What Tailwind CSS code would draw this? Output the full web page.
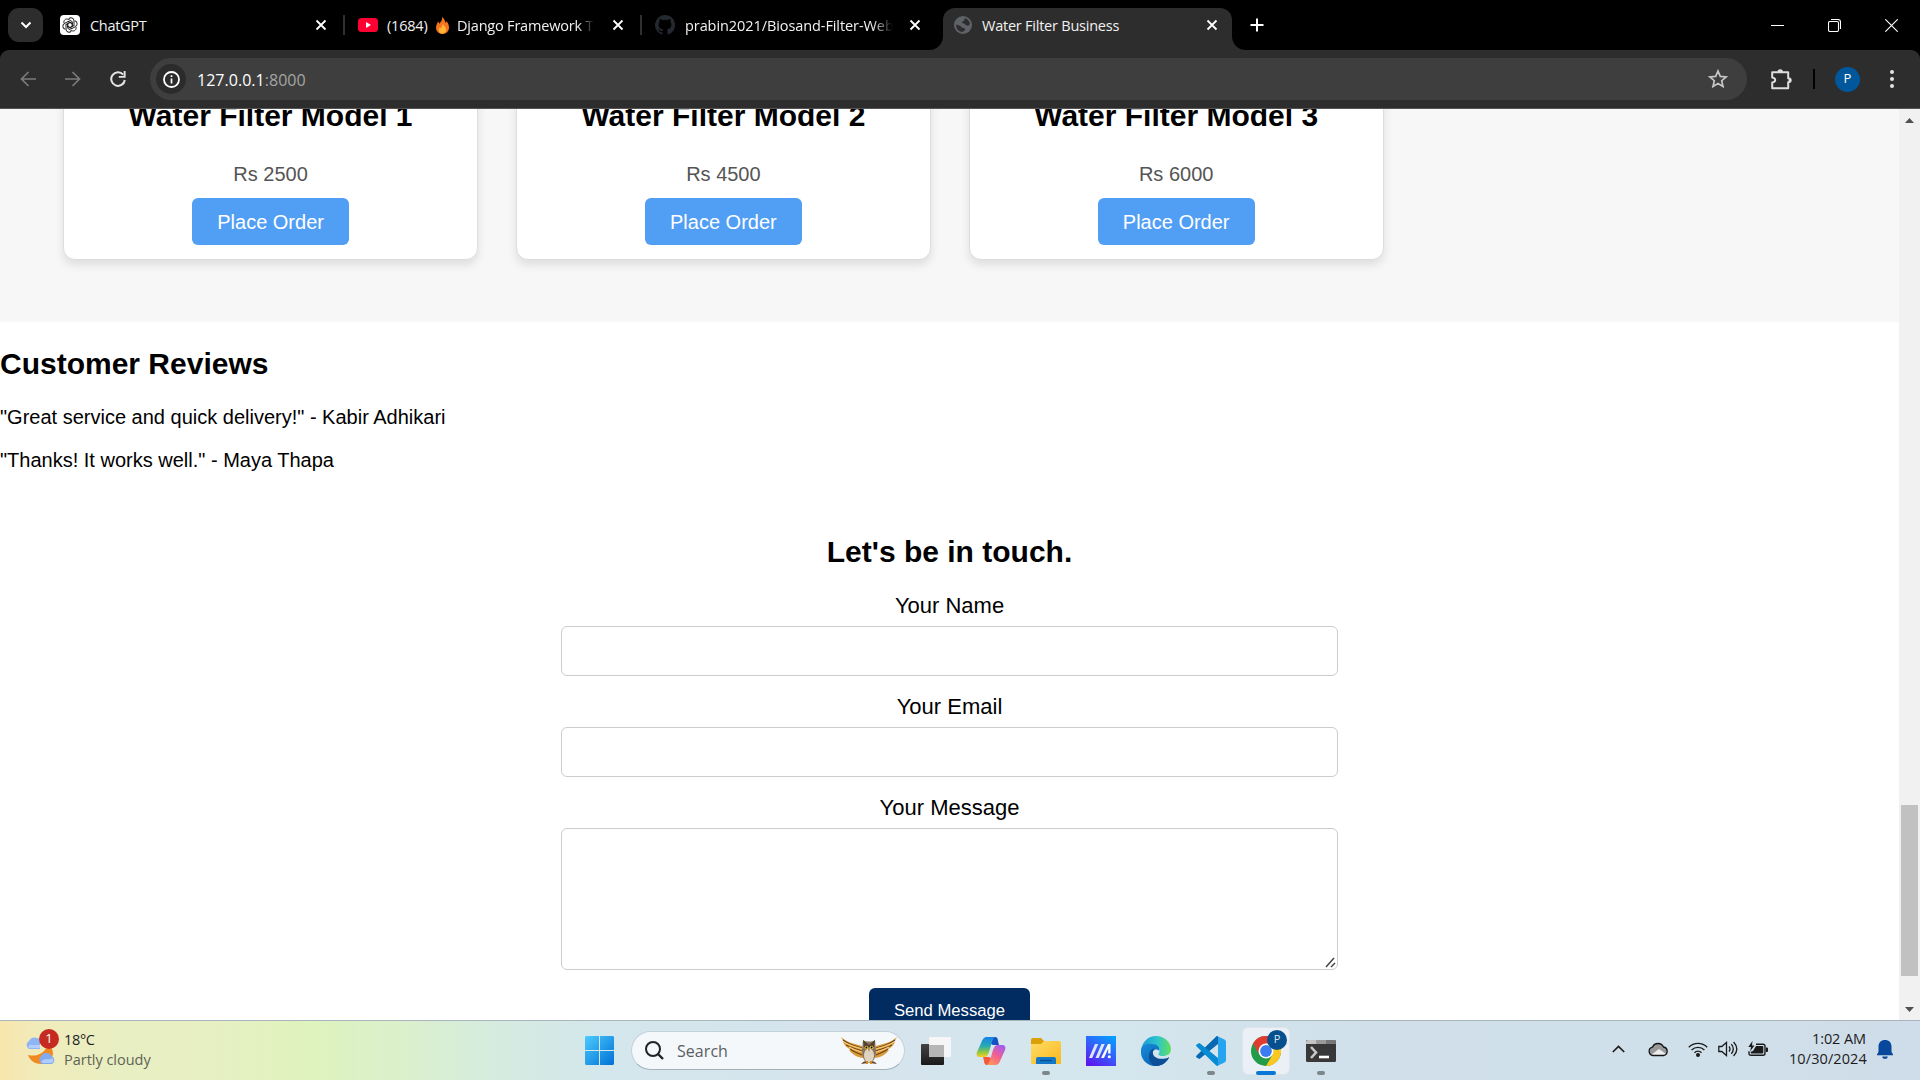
<!DOCTYPE html>
<html lang="en">
<head>
<meta charset="utf-8">
<title>Water Filter Business</title>
<script src="https://cdn.jsdelivr.net/npm/@tailwindcss/browser@4"></script>
</head>
<body class="flex h-[1080px] w-[1920px] flex-col overflow-hidden bg-white font-['Liberation_Sans',Arial,sans-serif] text-black">

<!-- Tab strip -->
<header class="flex h-[50px] shrink-0 items-center bg-black font-['Open_Sans','Noto_Sans',sans-serif] text-[14.5px] text-[#f1f1f1]">
  <button class="ml-2 flex h-[34px] w-[35px] items-center justify-center rounded-[11px] bg-[#2d2d2d]">
    <svg class="h-3 w-3" viewBox="0 0 12 12" fill="none" stroke="#fff" stroke-width="2"><path d="M1.500 3.500 6 8l4.500-4.500"/></svg>
  </button>

  <div class="ml-1 flex h-5 w-[298px] items-center border-r-2 border-[#303030] pr-4 pl-[13px]">
    <svg class="h-5 w-5 shrink-0" viewBox="0 0 20 20"><rect width="20" height="20" rx="4" fill="#fff"/><g fill="none" stroke="#222" stroke-width="1"><path id="petal" d="M10 7.400 7.700 8.700v4.600l4 2.300c2.700 1.400 5-1.200 4.300-3.600"/><use href="#petal" transform="rotate(60 10 10)"/><use href="#petal" transform="rotate(120 10 10)"/><use href="#petal" transform="rotate(180 10 10)"/><use href="#petal" transform="rotate(240 10 10)"/><use href="#petal" transform="rotate(300 10 10)"/></g></svg>
    <span class="ml-2.5 flex-1 pt-px tracking-[-0.3px]">ChatGPT</span>
    <svg class="h-3 w-3" viewBox="0 0 12 12" stroke="#fff" stroke-width="1.800"><path d="m1.500 1.500 9 9m0-9-9 9"/></svg>
  </div>

  <div class="flex h-5 w-[297px] items-center border-r-2 border-[#303030] pr-4 pl-[13px]">
    <svg class="h-5 w-5 shrink-0" viewBox="0 0 20 20"><rect y="3" width="20" height="14" rx="3.500" fill="#ff0033"/><path d="m8 7 5 3-5 3z" fill="#fff"/></svg>
    <span class="ml-[9px] w-[42px] shrink-0 pt-px tracking-[-0.2px]">(1684)</span>
    <svg class="ml-[7px] h-[17px] w-[13px] shrink-0" viewBox="0 0 13 17"><path d="M6 0c3 2 2.500 4 4 6 .3-1 .5-1.300.3-2 2 2 2.700 4.500 2.700 6.500 0 4-3 6.500-6.500 6.500S0 14.500 0 10.500C0 8 1.500 6 2 4.500c.8.700 1 1.500 1.200 2.200C5.500 4.500 6.500 2.500 6 0z" fill="#f4731c"/><path d="M6.800 6.500c.3 2 3.300 3.500 3.300 6.300 0 2.200-1.700 3.600-3.600 3.600s-3.700-1.300-3.700-3.700c0-1 .5-2 1-2.500.4.600.7.800 1.200 1 .8-1.400 1.300-2.700 1.800-4.700z" fill="#ffb636"/></svg>
    <span class="ml-2 w-[137px] overflow-hidden pt-px whitespace-nowrap tracking-[-0.2px] [mask-image:linear-gradient(90deg,#000_88%,transparent)]">Django Framework Tu</span>
    <svg class="ml-auto h-3 w-3 shrink-0" viewBox="0 0 12 12" stroke="#fff" stroke-width="1.800"><path d="m1.500 1.500 9 9m0-9-9 9"/></svg>
  </div>

  <div class="flex h-5 w-[296px] items-center pr-[17px] pl-[13px]">
    <svg class="h-5 w-5 shrink-0" viewBox="0 0 16 16" fill="#24292f"><path d="M8 0a8 8 0 0 0-2.530 15.590c.4.070.55-.17.550-.38v-1.490c-2.010.37-2.530-.49-2.690-.94-.09-.23-.48-.94-.82-1.130-.28-.15-.68-.52-.01-.53.630-.01 1.080.58 1.230.82.720 1.210 1.870.87 2.330.66.070-.52.280-.87.510-1.070-1.780-.2-3.640-.89-3.640-3.950 0-.87.310-1.590.82-2.150-.08-.2-.36-1.020.08-2.120 0 0 .67-.21 2.200.82a7.600 7.600 0 0 1 4 0c1.530-1.040 2.200-.82 2.200-.82.440 1.100.160 1.920.08 2.120.51.560.82 1.270.82 2.150 0 3.070-1.870 3.750-3.650 3.950.290.25.540.73.540 1.480v2.200c0 .21.150.46.550.38A8 8 0 0 0 8 0z"/></svg>
    <span class="ml-2.5 w-[208px] overflow-hidden pt-px whitespace-nowrap tracking-[-0.08px] [mask-image:linear-gradient(90deg,#000_90%,transparent)]">prabin2021/Biosand-Filter-Web</span>
    <svg class="ml-auto h-3 w-3 shrink-0" viewBox="0 0 12 12" stroke="#fff" stroke-width="1.800"><path d="m1.500 1.500 9 9m0-9-9 9"/></svg>
  </div>

  <div class="-ml-[9px] flex items-end self-end">
    <svg class="h-3.5 w-3.5" viewBox="0 0 14 14"><path d="M14 0v14H0C8 14 14 8 14 0z" fill="#2d2d2d"/></svg>
    <div class="flex h-[42px] w-[289px] items-center rounded-t-[12px] bg-[#2d2d2d] pr-3.5 pb-2 pl-[11px]">
      <svg class="h-[18px] w-[18px]" viewBox="0 0 18 18"><circle cx="9" cy="9" r="9" fill="#5f6368"/><path d="M10.500 2C13 2.500 15.500 5 16 8c-1 2-2 1.500-3 1.500-2 0-1.500-2-3-2-2 0-2.500-1-1.500-2 1.500-.6 2.500-1 2-3.500zM2 8.500c2 1 3 .5 4.500 1.500s1 2 2.500 2 2.500.5 2 2-2 .5-2 2c-4 0-7-3-7-7.500z" fill="#2d2d2d"/></svg>
      <span class="ml-2.5 flex-1 pt-px tracking-[-0.23px]">Water Filter Business</span>
      <svg class="h-3 w-3" viewBox="0 0 12 12" stroke="#fff" stroke-width="1.800"><path d="m1.500 1.500 9 9m0-9-9 9"/></svg>
    </div>
    <svg class="h-3.5 w-3.5" viewBox="0 0 14 14"><path d="M0 0v14h14C6 14 0 8 0 0z" fill="#2d2d2d"/></svg>
  </div>
  <svg class="ml-1 h-3.5 w-3.5" viewBox="0 0 14 14" stroke="#fff" stroke-width="2"><path d="M7 .5v13M.5 7h13"/></svg>
  <div class="mr-[22px] ml-auto flex items-center gap-[44px]">
    <svg class="h-[13px] w-[13px]" viewBox="0 0 13 13" stroke="#fff"><path d="M0 6.500h13"/></svg>
    <svg class="h-[13px] w-[13px]" viewBox="0 0 13 13" fill="none" stroke="#fff" stroke-width="1.100"><rect x=".5" y="2.500" width="10" height="10" rx="1.500"/><path d="M3 .5h7a2.500 2.500 0 0 1 2.500 2.500v7"/></svg>
    <svg class="h-[13px] w-[13px]" viewBox="0 0 13 13" stroke="#fff" stroke-width="1.100"><path d="m.3.3 12.400 12.400m0-12.400L.3 12.700"/></svg>
  </div>
</header>

<!-- Toolbar -->
<div class="h-[59px] shrink-0 bg-black font-['Open_Sans','Noto_Sans',sans-serif]">
  <div class="flex h-full items-center rounded-t-[9px] border-b border-[#565353] bg-[#2d2d2d]">
    <svg class="ml-5 h-4 w-4" viewBox="0 0 16 16" fill="none" stroke="#7b7b7b" stroke-width="1.700"><path d="M16 8H2m6.500-7L1.500 8l7 7"/></svg>
    <svg class="ml-[29px] h-4 w-4" viewBox="0 0 16 16" fill="none" stroke="#7b7b7b" stroke-width="1.700"><path d="M0 8h14M7.500 1l7 7-7 7"/></svg>
    <svg class="ml-[29px] h-4 w-4" viewBox="0 0 16 16"><path d="M13.200 3.600A6.800 6.800 0 1 0 14.800 9" fill="none" stroke="#e4e4e4" stroke-width="2"/><path d="M15.600 0v6.800H8.800V5h4.900V0z" fill="#e4e4e4"/></svg>
    <div class="ml-6 flex h-[42px] w-[1597px] items-center rounded-full bg-[#3e3e3e] pr-[19px] pl-1.5">
      <span class="flex h-[30px] w-[30px] items-center justify-center rounded-full bg-[#2b2b2b]"><svg class="h-[17px] w-[17px]" viewBox="0 0 17 17"><circle cx="8.500" cy="8.500" r="7.500" fill="none" stroke="#fff" stroke-width="1.800"/><path d="M8.500 7.500v5M8.500 4.300v1.800" stroke="#fff" stroke-width="1.700"/></svg></span>
      <span class="ml-[11px] flex-1 pt-px text-base tracking-[0.03px] text-white">127.0.0.1<span class="text-[#a5a5a5]">:8000</span></span>
      <svg class="h-5 w-5" viewBox="0 0 20 20" fill="none" stroke="#c7c7c7" stroke-width="1.700"><path d="m10 2 2.300 5.400 5.800.5-4.400 3.800 1.300 5.700L10 14.400l-5 3 1.300-5.700L1.900 7.900l5.800-.5z"/></svg>
    </div>
    <svg class="ml-6 h-[21px] w-[21px]" viewBox="0 0 21 21"><path d="M1.200 3.200h16v6c3.400-.4 3.400 4.400 0 4v6h-16v-5.600c4-.6 4-4.400 0-5z" fill="none" stroke="#dedede" stroke-width="2" stroke-linejoin="round"/><path d="M6.500 3a2.700 2.700 0 0 1 5.400 0z" fill="#dedede"/><path d="M17.500 8.600a2.700 2.700 0 0 1 0 5.200z" fill="#dedede"/></svg>
    <span class="ml-[21px] h-5 w-0.5 bg-black"></span>
    <span class="ml-5 flex h-[25px] w-[25px] items-center justify-center rounded-full bg-[#00579c] text-[13px] text-white">P</span>
    <svg class="ml-[30px] h-[18px] w-1" viewBox="0 0 4 18" fill="#e3e3e3"><circle cx="2" cy="2" r="2"/><circle cx="2" cy="9" r="2"/><circle cx="2" cy="16" r="2"/></svg>
  </div>
</div>

<!-- Page viewport -->
<div class="flex h-[911px] shrink-0">
  <main class="h-full flex-1 overflow-hidden">
    <section class="h-[213px] bg-[#f7f7f7] pl-[63.200px]">
      <div class="flex gap-[38px] text-center">
        <article class="-mt-5 flex h-[171px] w-[414.800px] flex-col items-center rounded-[12px] border border-[#ddd] bg-white pt-[9px] shadow-[0_5px_10px_rgba(0,0,0,0.1)]">
          <h2 class="text-[30px] leading-[34px] font-bold">Water Filter Model 1</h2>
          <p class="mt-[30px] text-xl leading-[22px] text-[#555]">Rs 2500</p>
          <button class="mt-[13px] h-[47px] rounded-md bg-[#519ef5] px-[25px] text-xl leading-[22px] text-white">Place Order</button>
        </article>
        <article class="-mt-5 flex h-[171px] w-[414.800px] flex-col items-center rounded-[12px] border border-[#ddd] bg-white pt-[9px] shadow-[0_5px_10px_rgba(0,0,0,0.1)]">
          <h2 class="text-[30px] leading-[34px] font-bold">Water Filter Model 2</h2>
          <p class="mt-[30px] text-xl leading-[22px] text-[#555]">Rs 4500</p>
          <button class="mt-[13px] h-[47px] rounded-md bg-[#519ef5] px-[25px] text-xl leading-[22px] text-white">Place Order</button>
        </article>
        <article class="-mt-5 flex h-[171px] w-[414.800px] flex-col items-center rounded-[12px] border border-[#ddd] bg-white pt-[9px] shadow-[0_5px_10px_rgba(0,0,0,0.1)]">
          <h2 class="text-[30px] leading-[34px] font-bold">Water Filter Model 3</h2>
          <p class="mt-[30px] text-xl leading-[22px] text-[#555]">Rs 6000</p>
          <button class="mt-[13px] h-[47px] rounded-md bg-[#519ef5] px-[25px] text-xl leading-[22px] text-white">Place Order</button>
        </article>
      </div>
    </section>

    <section class="pt-[25px]">
      <h2 class="text-[30px] leading-[34px] font-bold">Customer Reviews</h2>
      <p class="mt-[25px] text-xl leading-[22px]">"Great service and quick delivery!" - Kabir Adhikari</p>
      <p class="mt-[21px] text-xl leading-[22px]">"Thanks! It works well." - Maya Thapa</p>
    </section>

    <section class="mx-auto flex w-[777px] flex-col items-center pt-16 text-[22px] leading-[25px]">
      <h2 class="text-[30px] leading-[34px] font-bold">Let's be in touch.</h2>
      <label class="mt-6" for="name">Your Name</label>
      <input id="name" class="mt-2 h-[50px] w-full rounded-md border border-[#ccc]">
      <label class="mt-[18px]" for="email">Your Email</label>
      <input id="email" class="mt-2 h-[50px] w-full rounded-md border border-[#ccc]">
      <label class="mt-[18px]" for="message">Your Message</label>
      <div class="relative mt-2 h-[142px] w-full">
        <textarea id="message" class="block h-full w-full resize-none rounded-md border border-[#ccc]"></textarea>
        <svg class="absolute right-0.5 bottom-0.5 h-[11px] w-[11px]" viewBox="0 0 11 11" fill="none" stroke="#444" stroke-width="1.500"><path d="m1 10 8-9M6 10l4-4"/></svg>
      </div>
      <button class="mt-[18px] h-[47px] rounded-md bg-[#002c62] px-[25px] pb-0.5 text-[16.670px] leading-[19px] text-white">Send Message</button>
    </section>
  </main>

  <aside class="flex h-full w-[21px] flex-col items-center bg-[#f1f1f1]">
    <svg class="mt-[9px] h-[5px] w-[9px]" viewBox="0 0 9 5" fill="#505050"><path d="M0 5h9L4.500 0z"/></svg>
    <div class="mt-[682px] h-[171px] w-[17px] bg-[#c1c1c1]"></div>
    <svg class="mt-[31px] h-[5px] w-[9px]" viewBox="0 0 9 5" fill="#505050"><path d="M0 0h9L4.500 5z"/></svg>
  </aside>
</div>

<!-- Taskbar -->
<footer class="flex h-[60px] shrink-0 items-center border-t border-[#a9b5bc] bg-[linear-gradient(90deg,#f8e6ad_0px,#f0ebbb_40px,#e8efc3_120px,#e6efc2_220px,#def3bd_310px,#dbf0cb_400px,#d5ebe0_500px,#d4e7ec_600px,#d5e3ed_860px,#d5e7ee_1060px,#d0dfea_1400px,#d0e0ea_1700px,#cfdce9_1920px)] font-['Open_Sans','Noto_Sans',sans-serif]">
  <div class="relative ml-6 h-[42px] w-[31px]">
    <svg class="h-10 w-[31px]" viewBox="0 0 31 40"><path d="M4 25c8 2 17-1 20-11 9 7 5 19-6 20-6 .3-12-3-14-9z" fill="#f08a20"/><path d="M5 19a4.500 4.500 0 0 1 0-8 6.500 6.500 0 0 1 11-1v9z" fill="#8fb6f4"/><path d="M5 18a3.500 3.500 0 0 1 0-3h11v3z" fill="#b4cdfb"/><path d="M18 34a5 5 0 0 1-.5-8.500 6 6 0 0 1 10.500 1 4 4 0 0 1-.5 7.500z" fill="#82abef"/><path d="M17 32c3-5 8-1 11-4 3 2 1 5-1 5H19z" fill="#b3cdfb"/></svg>
    <span class="absolute -top-px left-[15px] flex h-5 w-5 items-center justify-center rounded-full bg-[#c52b20] text-[13px] text-white">1</span>
  </div>
  <div class="ml-[9px] w-[521px] pb-0.5 text-[14.500px] leading-5 text-[#1e1e1e]">
    <p class="tracking-[-0.35px]">18°C</p>
    <p class="tracking-[-0.02px] text-[#5f6355]">Partly cloudy</p>
  </div>

  <svg class="h-[29px] w-[29px]" viewBox="0 0 29 29"><defs><linearGradient id="win" x1="0" y1="0" x2="1" y2="1"><stop stop-color="#4ccbff"/><stop offset="1" stop-color="#0070d4"/></linearGradient></defs><path d="M1 0h13v14H0V1zM15 0h13l1 1v13H15zM0 15h14v14H1l-1-1zM15 15h14v13l-1 1H15z" fill="url(#win)"/></svg>

  <div class="ml-[17px] flex h-[39px] w-[274px] items-center rounded-full border border-[#c3d1da] border-b-[#a3b1bb] bg-[#f4f8fb] pr-[7px] pl-[13px]">
    <svg class="h-[19px] w-[19px]" viewBox="0 0 19 19" fill="none" stroke="#222" stroke-width="2"><circle cx="8" cy="8" r="7"/><path d="m13 13 5 5" stroke-width="2.400"/></svg>
    <span class="ml-[13px] flex-1 text-base tracking-[0.05px] text-[#5b5f63]">Search</span>
    <svg class="h-7 w-14" viewBox="0 0 56 28"><g id="wing"><path d="M0 0c7 6 14 7 21 9l2 12C16 21 11 17 8 13l3 .3C6 11 3 8 2 5l3 1C2 4 1 2 0 0z" fill="#d99a3a"/><path d="M2 3c6 5 13 6 19 8M5 8c6 3 11 4 16 6M9 12c4 3 8 4 12 6" stroke="#704518" stroke-width="1.100" fill="none"/><path d="M3 5c6 4 12 5 18 7M8 10c5 3 9 4 13 5" stroke="#f7cb74" stroke-width="1.200" fill="none"/></g><use href="#wing" transform="matrix(-1 0 0 1 56 0)"/><path d="M22 3c3 2 9 2 12 0l1 10c0 8-3 13-7 13s-7-5-7-13z" fill="#8a7560"/><ellipse cx="28" cy="18.500" rx="5" ry="7" fill="#dfd3c2"/><path d="m22 3 6 5 6-5-1 7H23z" fill="#57412e"/><circle cx="25.400" cy="10.500" r="1.700" fill="#f4cf28"/><circle cx="30.600" cy="10.500" r="1.700" fill="#f4cf28"/><circle cx="25.400" cy="10.500" r=".9"/><circle cx="30.600" cy="10.500" r=".9"/><path d="m27 12 1 3 1-3z" fill="#c07a1a"/><path d="M20 27q4-5 7-1zM36 27q-4-5-7-1z" fill="#65462d"/><path d="M26 27v-3m4 3v-3" stroke="#d08a20" stroke-width="2"/></svg>
  </div>

  <svg class="ml-4 h-7 w-[30px]" viewBox="0 0 30 28"><defs><linearGradient id="tv" x1="0" y1="0" x2="0" y2="1"><stop stop-color="#444"/><stop offset="1" stop-color="#191919"/></linearGradient></defs><rect y="7" width="23" height="21" rx="1" fill="url(#tv)"/><rect x="8" width="22" height="20" rx="1" fill="#f6f6f6"/><path d="M8 8h15v12H8z" fill="#b6b6b6"/></svg>

  <svg class="ml-[25px] h-7 w-[30px]" viewBox="0 0 30 28"><defs><linearGradient id="cpa" x1="0" y1="0" x2="0" y2="1"><stop stop-color="#1682e8"/><stop offset=".45" stop-color="#26aab4"/><stop offset=".75" stop-color="#8fc842"/><stop offset="1" stop-color="#f6cf25"/></linearGradient><linearGradient id="cpb" x1=".8" y1="0" x2=".2" y2="1"><stop stop-color="#a35cf0"/><stop offset=".5" stop-color="#f15f92"/><stop offset="1" stop-color="#ff9b54"/></linearGradient></defs><path d="M8 3c1-2 2-3 4-3h7c2 0 3 2 3 4l1 4h-6z" fill="#1550c4"/><path d="M22 25c-1 2-2 3-4 3h-7c-2 0-3-2-3-4l-1-4h6z" fill="#f5593d"/><path d="M16 0h-5C8 0 6.500 2 5.500 5L1 15c-1 3 0 5 3 5h4c3 0 4-2 5-5l3-10c1-3 2-5 4-5z" fill="url(#cpa)"/><path d="M14 28h5c3 0 4.500-2 5.500-5L29 13c1-3 0-5-3-5h-4c-3 0-4 2-5 5l-3 10c-1 3-2 5-4 5z" fill="url(#cpb)"/></svg>

  <div class="relative ml-[25px] h-[30px] w-[30px]">
    <svg class="h-[30px] w-[30px]" viewBox="0 0 30 30"><defs><linearGradient id="fold" x1="0" y1="0" x2="1" y2="1"><stop stop-color="#ffdc68"/><stop offset="1" stop-color="#f9b81d"/></linearGradient></defs><path d="M0 4q0-2 2-2h8l3 3v5H0z" fill="#dca007"/><path d="M0 8h10l3-3h15q2 0 2 2v20q0 1-1 1H1q-1 0-1-1z" fill="url(#fold)"/><path d="M5 28v-5q0-2 2-2h16q2 0 2 2v5z" fill="#1378c8"/><path d="M9 24.500h12" stroke="#064d92" stroke-width="1.300"/></svg>
    <span class="absolute top-[35px] left-[11px] h-1 w-2 rounded-full bg-[#7d868b]"></span>
  </div>

  <svg class="ml-[25px] h-[30px] w-[30px]" viewBox="0 0 30 30"><defs><linearGradient id="asus" x1=".8" y1="0" x2=".2" y2="1"><stop stop-color="#079cff"/><stop offset=".55" stop-color="#3b55fa"/><stop offset="1" stop-color="#5b17ee"/></linearGradient></defs><path d="M0 0h30v30H0z" fill="url(#asus)"/><path d="M3 22 9 8h3.200L6.200 22zM9.500 22l6-14h3.200l-6 14z" fill="#dde6ff"/><path d="M15 22 22 8h2.500v9.500h-2.300v-5L18 22z" fill="#fff"/><circle cx="23.300" cy="20.800" r="1.500" fill="#fff"/></svg>

  <svg class="ml-[25px] h-[30px] w-[30px]" viewBox="0 0 30 30"><defs><linearGradient id="eda"><stop stop-color="#1b96d6"/><stop offset=".55" stop-color="#2dc5cc"/><stop offset="1" stop-color="#63e05b"/></linearGradient><linearGradient id="edb" x1="0" y1="0" x2="1" y2="1"><stop stop-color="#168ddb"/><stop offset="1" stop-color="#0755a6"/></linearGradient></defs><path d="M0 15C1 6 7 0 15 0c9 0 15 7 15 13 0 5-4 7-8 7-5 0-5-2-4-3 2-3-1-8-7-8C6 9 1 12 0 15z" fill="url(#eda)"/><path d="M0 14C1 9 6 7 11 8c6 0 8 4 7 7-2-3-7-1-7 4 0 6 9 8 16 4-3 5-8 7-12 7C6 30-1 23 0 14z" fill="url(#edb)"/><path d="M13 12c-7 3-7 16 2 18 5 0 10-3 13-8 .3-.6-.2-.9-.7-.6C20 25 8 22 13 12z" fill="#0d4f96"/></svg>

  <div class="relative ml-[25px] h-[30px] w-[30px]">
    <svg class="h-[30px] w-[30px]" viewBox="0 0 30 30"><path d="m21 0 7.500 3.500Q30 4.200 30 6v18q0 1.800-1.500 2.500L21 30l1-8V8z" fill="#27a4ef"/><path d="M22 8 3.500 23 .6 21.400q-1-1 0-2L20 .7q1-1 2-.3z" fill="#0869b2"/><path d="M22 22 3.500 7 .6 8.600q-1 1 0 2L20 29.300q1 1 2 .3z" fill="#078bd2"/></svg>
    <span class="absolute top-[35px] left-[11px] h-1 w-2 rounded-full bg-[#7d868b]"></span>
  </div>

  <div class="relative ml-4 flex h-12 w-12 items-center justify-center rounded-md border border-[#dde5eb] bg-[#eaf0f6]">
    <svg class="h-[30px] w-[30px]" viewBox="0 0 30 30"><circle cx="15" cy="15" r="15" fill="#249b48"/><path d="M15 15 2 7.500A15 15 0 0 1 28 7.500H15z" fill="#e23c30"/><path d="M2 7.500 8.500 18.800 15 15z" fill="#e23c30"/><path d="M15 7.500h13A15 15 0 0 1 15 30l6.500-11.200z" fill="#fcc81f"/><circle cx="15" cy="15" r="7.500" fill="#fff"/><circle cx="15" cy="15" r="5.900" fill="#397df0"/></svg>
    <span class="absolute top-0.5 left-6 flex h-5 w-5 items-center justify-center rounded-full bg-[#06508f] text-[11px] text-[#d7e8f5]">P</span>
    <span class="absolute top-[43px] left-[13px] h-1 w-5 rounded-full bg-[#0878d4]"></span>
  </div>

  <div class="relative ml-4 h-[30px] w-[30px]">
    <svg class="h-[30px] w-[30px]" viewBox="0 0 30 30"><rect y="4" width="30" height="22" rx="1.500" fill="#383838"/><path d="M1.500 4H10v4H0V5.500z" fill="#c4c4c4"/><path d="M10 4h10v4H10z" fill="#9a9a9a"/><path d="M20 4h8.500L30 5.500V8H20z" fill="#777"/><path d="m5 11 5 5.500L5 22" fill="none" stroke="#c8c8c8" stroke-width="2.600"/><path d="M13 21h10" stroke="#fff" stroke-width="2.600"/></svg>
    <span class="absolute top-[35px] left-[11px] h-1 w-2 rounded-full bg-[#7d868b]"></span>
  </div>

  <div class="ml-auto flex items-center pb-[3px]">
    <svg class="h-2 w-[13px]" viewBox="0 0 13 8" fill="none" stroke="#1c1c1c" stroke-width="1.700"><path d="m.8 7 5.700-5.500L12.200 7"/></svg>
    <svg class="ml-[23px] h-4 w-5" viewBox="0 0 20 16"><path d="M5 14.500a4.200 4.200 0 0 1-.5-8.300 6 6 0 0 1 11-.2 4.300 4.300 0 0 1 0 8.500z" fill="#999"/><path d="m3 14 8-6 7 5-2 1.500H5z" fill="#ededed"/><path d="M5 14.500a4.200 4.200 0 0 1-.5-8.300 6 6 0 0 1 11-.2 4.300 4.300 0 0 1 0 8.500z" fill="none" stroke="#151515" stroke-width="1.300"/></svg>
    <svg class="ml-5 h-4 w-5" viewBox="0 0 20 16" fill="none" stroke="#1b1b1b" stroke-width="1.400"><path d="M.8 6.200a13 13 0 0 1 18.400 0M3.600 9a9 9 0 0 1 12.800 0M6.500 11.700a5 5 0 0 1 7 0"/><circle cx="10" cy="14" r="1.300" fill="#1b1b1b"/></svg>
    <svg class="ml-2.5 h-4 w-5" viewBox="0 0 20 16" fill="none" stroke="#1b1b1b" stroke-width="1.300"><path d="M.8 5.500h3L8.500 1.500v13l-4.700-4h-3zM11 5.500q2 2.500 0 5M13.300 3.200q4 4.800 0 9.600M15.600 1q6.500 7 0 14"/></svg>
    <svg class="ml-2.5 h-4 w-5" viewBox="0 0 20 16"><path d="M8 3.200h7q2 0 2 2v7q0 2-2 2H3q-2 0-2-2v-2" fill="none" stroke="#1b1b1b" stroke-width="1.400"/><path d="M8 5h6.500q.8 0 .8.800v5.900q0 .8-.8.800H3.500q-.8 0-.8-.8v-1L5 10zM18 6.500h1q1 0 1 1V10q0 1-1 1h-1zM4.500 0 .3 6H3l-.8 4.300L6.500 4.500H4z" fill="#1b1b1b"/></svg>
    <div class="ml-[21px] w-[77px] text-right text-[14.500px] leading-5 whitespace-nowrap text-[#1c1c1c]">
      <p class="tracking-[-0.1px]">1:02 AM</p>
      <p class="tracking-[0.08px]">10/30/2024</p>
    </div>
    <svg class="mr-[27px] ml-[11px] h-[19px] w-4" viewBox="0 0 16 19" fill="#07479c"><path d="M8 0c4 0 6.500 2.700 6.500 6.500v5.200L16 14.500v.8H0v-.8l1.500-2.800V6.500C1.500 2.700 4 0 8 0zM5.300 16.500h5.400a2.700 2.300 0 0 1-5.400 0z"/></svg>
  </div>
</footer>
</body>
</html>
